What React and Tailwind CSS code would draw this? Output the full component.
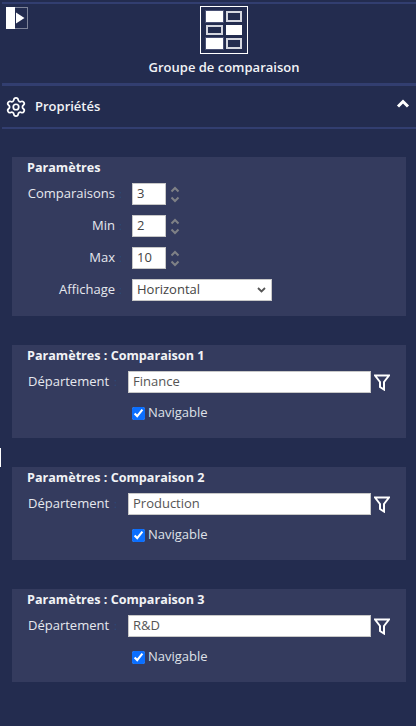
import React from "react";
import { Settings } from "lucide-react";

function Stepper() {
  return (
    <div className="ml-[4px] flex flex-col gap-[3px]">
      <svg width="10" height="7" viewBox="0 0 10 7" fill="none">
        <path d="M1.5 5.5l3.5-3.5 3.5 3.5" stroke="#7f8186" strokeWidth="2" />
      </svg>
      <svg width="10" height="7" viewBox="0 0 10 7" fill="none">
        <path d="M1.5 1.5l3.5 3.5 3.5-3.5" stroke="#7f8186" strokeWidth="2" />
      </svg>
    </div>
  );
}

function FieldLabel({ children }) {
  return (
    <>
      <label className="w-[103px] text-right text-[13px] text-[#e6e8ee]">{children}</label>
      <span className="w-[17px] pl-[4px] text-[11px] text-[#2c4a7c]">:</span>
    </>
  );
}

function NumberRow({ label, value }) {
  return (
    <div className="flex h-[32px] items-center">
      <FieldLabel>{label}</FieldLabel>
      <div className="flex h-[22px] w-[34px] items-center border border-[#c8c8c8] bg-white pl-[4px] text-[13px] text-[#444]">
        {value}
      </div>
      <Stepper />
    </div>
  );
}

function ComparisonPanel({ n, dept }) {
  return (
    <section className="ml-[12px] mr-[10px] h-[93px] bg-[#343b5e] pl-[15px] pt-[2px]">
      <h3 className="text-[12.6px] leading-[17px] font-bold text-[#f2f3f6]">
        Paramètres : Comparaison {n}
      </h3>
      <div className="mt-[7px] flex h-[22px] items-center">
        <label className="ml-[1px] w-[84px] whitespace-nowrap text-[13px] text-[#e6e8ee]">Département</label>
        <span className="w-[16px] pl-[2px] text-[11px] text-[#2c4a7c]">:</span>
        <div className="flex h-[22px] w-[243px] items-center border border-[#c8c8c8] bg-white pl-[4px] text-[13px] text-[#555]">
          {dept}
        </div>
        <svg className="ml-[3px]" width="16" height="17" viewBox="0 0 16 17" fill="none">
          <path d="M1 1.5h14L10 8v7.5l-4-2.5V8z" stroke="#fff" strokeWidth="2" strokeLinejoin="miter" />
        </svg>
      </div>
      <div className="mt-[10px] ml-[105px] flex h-[20px] items-center">
        <input type="checkbox" defaultChecked className="m-0 h-[13px] w-[13px] accent-[#0b6fff]" />
        <span className="ml-[3px] text-[13px] text-[#dfe1e8]">Navigable</span>
      </div>
    </section>
  );
}

function GroupIcon() {
  const solid = "bg-white";
  const hollow = "border-2 border-[#d5d7e0] bg-[#232c4f]";
  return (
    <div className="grid h-[48px] w-[48px] grid-cols-2 content-center justify-center gap-x-[3px] gap-y-[3px] border border-white px-[5px]">
      <div className={`h-[11px] ${solid} outline-1 outline-[#4a5175]`} />
      <div className={`h-[11px] ${hollow}`} />
      <div className={`h-[10px] ${hollow}`} />
      <div className={`h-[10px] ${solid}`} />
      <div className={`h-[11px] ${solid} outline-1 outline-[#4a5175]`} />
      <div className={`h-[11px] ${hollow}`} />
    </div>
  );
}

export default function App() {
  return (
    <div
      className="relative h-[726px] w-[416px] overflow-hidden bg-[#232c4f]"
      style={{ fontFamily: '"Open Sans", sans-serif' }}
    >
      <div className="ml-[2px] mt-[2px] h-[2px] bg-[#323e70]" />

      {/* toggle */}
      <div className="absolute left-[6px] top-[7px] flex h-[22px] w-[22px]">
        <div className="h-full w-[9px] bg-white" />
        <div className="flex h-full w-[13px] items-center border border-l-0 border-[#7d8398]">
          <svg width="10" height="12" viewBox="0 0 10 12">
            <path d="M1 0.5l8.5 5.5L1 11.5z" fill="#fff" />
          </svg>
        </div>
      </div>

      <header className="flex flex-col items-center pl-[32px] pt-[1px]">
        <div className="mt-[1px]">
          <GroupIcon />
        </div>
        <div className="mt-[4px] h-[18px] text-[13px] leading-[18px] font-semibold text-[#f2f3f6]">
          Groupe de comparaison
        </div>
      </header>

      <div className="ml-[2px] mt-[7px] h-[3px] bg-[#323e70]" />
      <div className="flex h-[41px] items-center pl-[5px] pr-[6px]">
        <Settings size={22} color="#fff" strokeWidth={1.9} />
        <span className="ml-[8px] text-[13px] font-semibold text-[#f2f3f6]">Propriétés</span>
        <svg className="mb-[6px] ml-auto" width="14" height="10" viewBox="0 0 14 10" fill="none">
          <path d="M2 7.5l5-5 5 5" stroke="#fff" strokeWidth="3" />
        </svg>
      </div>
      <div className="ml-[2px] h-[2px] bg-[#323e70]" />

      <section className="ml-[12px] mr-[10px] mt-[28px] h-[159px] bg-[#343b5e] pl-[15px] pt-[2px]">
        <h3 className="text-[12.6px] leading-[17px] font-bold text-[#f2f3f6]">Paramètres</h3>
        <div className="-ml-[15px] mt-[2px]">
          <NumberRow label="Comparaisons" value="3" />
          <NumberRow label="Min" value="2" />
          <NumberRow label="Max" value="10" />
          <div className="flex h-[32px] items-center">
            <FieldLabel>Affichage</FieldLabel>
            <div className="flex h-[22px] w-[140px] items-center justify-between border border-[#c8c8c8] bg-white pl-[4px] pr-[5px] text-[13px] text-[#444]">
              Horizontal
              <svg width="9" height="6" viewBox="0 0 9 6" fill="none">
                <path d="M1 1l3.5 3.5L8 1" stroke="#555" strokeWidth="1.8" />
              </svg>
            </div>
          </div>
        </div>
      </section>

      <div className="mt-[29px] flex flex-col gap-[29px]">
        <ComparisonPanel n={1} dept="Finance" />
        <ComparisonPanel n={2} dept="Production" />
        <ComparisonPanel n={3} dept="R&D" />
      </div>

      {/* stray marker on left edge */}
      <div className="absolute left-0 top-[448px] h-[19px] w-[1px] bg-white" />
    </div>
  );
}
